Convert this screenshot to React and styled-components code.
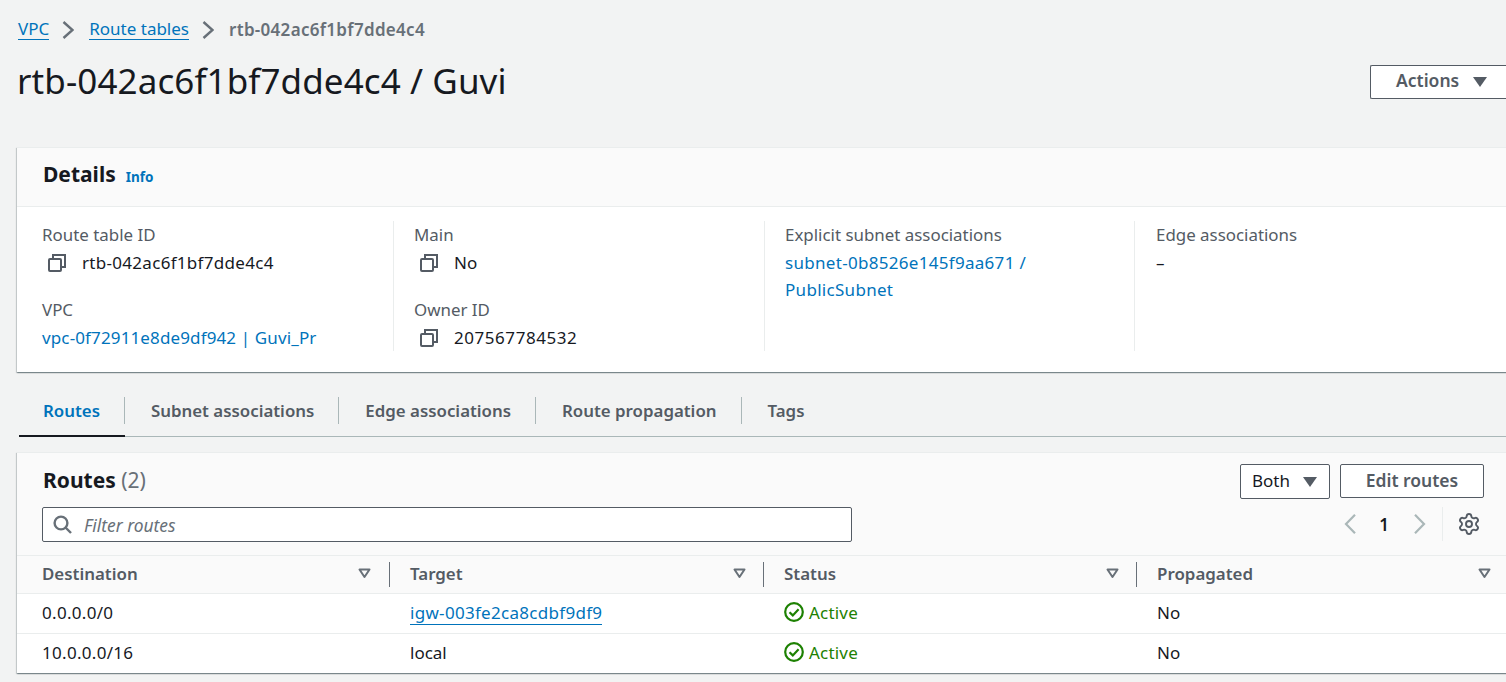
import styled, { createGlobalStyle } from "styled-components";
import { Settings } from "lucide-react";

const colors = {
  page: "#f2f3f3",
  head: "#fafafa",
  line: "#eaeded",
  text: "#16191f",
  muted: "#545b64",
  gray: "#687078",
  link: "#0073bb",
  green: "#1d8102",
  border: "#545b64",
};

const GlobalStyle = createGlobalStyle`
  html, body {
    margin: 0;
    padding: 0;
    background: ${colors.page};
    overflow: hidden;
  }
  body {
    font-family: "Noto Sans", "Open Sans", sans-serif;
    font-size: 17px;
    color: ${colors.text};
  }
  * { box-sizing: border-box; }
`;

const Page = styled.div`
  width: 1506px;
  height: 682px;
  overflow: hidden;
  padding: 0 0 0 17px;
`;

const Crumbs = styled.nav`
  display: flex;
  align-items: center;
  height: 58px;
  font-size: 17px;
`;

const CrumbLink = styled.a`
  color: ${colors.link};
  border-bottom: 1px solid ${colors.link};
  line-height: 21px;
  margin-left: 1px;
`;

const CrumbCurrent = styled.span`
  margin-left: 1px;
  color: ${colors.gray};
  font-weight: 600;
  letter-spacing: 0.3px;
`;

const CrumbChevron = styled.svg`
  width: 12px;
  height: 18px;
  margin: 1px 14px 0 13px;
  flex: none;
`;

const TitleRow = styled.div`
  display: flex;
  align-items: center;
  justify-content: space-between;
  height: 46px;
  margin-bottom: 43px;
`;

const Title = styled.h1`
  margin: 0;
  font-size: 35px;
  font-weight: 400;
  line-height: 46px;
  letter-spacing: 0.1px;
  color: ${colors.text};
`;

const Button = styled.button`
  display: inline-flex;
  align-items: center;
  justify-content: center;
  gap: ${(p) => p.$gap || 0}px;
  height: 34px;
  width: ${(p) => p.$width}px;
  padding: 0 0 3px;
  background: #fff;
  border: 1px solid ${colors.border};
  border-radius: 2px;
  color: ${colors.muted};
  font-family: inherit;
  font-size: 17.5px;
  font-weight: 600;
`;

const ActionsButton = styled(Button)`
  justify-content: flex-start;
  padding-left: 25px;
  margin-top: 1px;
  border-right: none;
  border-radius: 2px 0 0 2px;
`;

const BothSelect = styled(Button)`
  justify-content: flex-start;
  padding-left: 11px;
  height: 35px;
  color: ${colors.text};
  font-size: 17px;
  font-weight: 400;
`;

const Caret = styled.svg`
  width: 14px;
  height: 10px;
  margin-top: 3px;
  flex: none;
`;

const Card = styled.section`
  width: 1495px;
  background: #fff;
  box-shadow: 0 1px 1px 0 rgba(0, 28, 36, 0.3), 1px 1px 1px 0 rgba(0, 28, 36, 0.15), -1px 1px 1px 0 rgba(0, 28, 36, 0.15);
  border-top: 1px solid ${colors.line};
`;

const CardHead = styled.header`
  display: flex;
  align-items: center;
  gap: 10px;
  height: 59px;
  padding: 0 0 7px 26px;
  background: ${colors.head};
  border-bottom: 1px solid ${colors.line};
`;

const CardTitle = styled.h2`
  margin: 0;
  font-size: 21px;
  font-weight: 700;
  line-height: 28px;
  color: ${colors.text};
`;

const InfoLink = styled.a`
  color: ${colors.link};
  font-size: 13.5px;
  font-weight: 700;
  margin-top: 6px;
`;

const DetailGrid = styled.div`
  display: grid;
  grid-template-columns: 372px 371px 370px 370px;
  padding: 14px 0 20px 5px;
  height: 165px;
`;

const DetailCol = styled.div`
  display: flex;
  flex-direction: column;
  gap: 20px;
  padding-left: ${(p) => (p.$last ? 21 : 20)}px;
  border-right: ${(p) => (p.$last ? "none" : `1px solid ${colors.line}`)};
  height: 130px;
`;

const Field = styled.div`
  display: flex;
  flex-direction: column;
`;

const Label = styled.div`
  color: ${colors.muted};
  font-size: 16.9px;
  line-height: 28px;
`;

const Value = styled.div`
  display: flex;
  align-items: center;
  gap: 16px;
  padding-left: 6px;
  line-height: 27px;
  font-size: 17px;
  letter-spacing: ${(p) => p.$track || 0}px;
  color: ${colors.text};
`;

const ValueLink = styled.a`
  display: block;
  color: ${colors.link};
  font-size: 17px;
  line-height: 27px;
  letter-spacing: ${(p) => p.$track || 0}px;
`;

const Dash = styled.div`
  font-size: 17px;
  line-height: 27px;
`;

const CopyIcon = styled.svg`
  width: 18px;
  height: 18px;
  flex: none;
`;

const Tabs = styled.div`
  display: flex;
  height: 52px;
  margin: 13px 0 0 2px;
  border-bottom: 1px solid #aab7b8;
`;

const Tab = styled.div`
  position: relative;
  display: flex;
  align-items: center;
  height: 51px;
  padding: ${(p) => (p.$active ? "0 25px 0 24px" : "0 25px 0 26px")};
  font-size: 16.85px;
  font-weight: 600;
  color: ${(p) => (p.$active ? colors.link : colors.muted)};

  &::after {
    content: "";
    display: ${(p) => (p.$last ? "none" : "block")};
    position: absolute;
    right: 0;
    top: 12px;
    height: 27px;
    width: 1px;
    background: #aab7b8;
  }

  &::before {
    content: "";
    display: ${(p) => (p.$active ? "block" : "none")};
    position: absolute;
    left: 0;
    right: 0;
    bottom: -1px;
    height: 2px;
    background: ${colors.text};
  }
`;

const RoutesCard = styled(Card)`
  margin-top: 15px;
`;

const RoutesHead = styled.div`
  display: flex;
  justify-content: space-between;
  height: 102px;
  padding: 11px 28px 0 25px;
  background: ${colors.head};
`;

const RoutesLeft = styled.div`
  display: flex;
  flex-direction: column;
  gap: 13px;
  padding-top: 2px;

  h2 {
    margin-left: 1px;
  }
`;

const Count = styled.span`
  color: ${colors.gray};
  font-weight: 400;
`;

const FilterBox = styled.div`
  display: flex;
  align-items: center;
  gap: 12px;
  width: 810px;
  height: 35px;
  padding-left: 10px;
  background: #fff;
  border: 1px solid ${colors.border};
  border-radius: 2px;
  color: ${colors.gray};
  font-size: 17.4px;
  font-style: italic;
`;

const RoutesRight = styled.div`
  display: flex;
  flex-direction: column;
  align-items: flex-end;
  gap: 8px;
`;

const ButtonRow = styled.div`
  display: flex;
  align-items: flex-start;
  gap: 10px;
`;

const Pager = styled.div`
  display: flex;
  align-items: center;
  height: 34px;
  padding-right: 3px;
`;

const PageNum = styled.span`
  width: 20px;
  margin: 0 18px 0 16px;
  font-size: 17px;
  font-weight: 600;
  text-align: center;
`;

const PagerDivider = styled.span`
  width: 1px;
  height: 34px;
  margin: 0 14px;
  background: ${colors.line};
`;

const TableRow = styled.div`
  display: grid;
  grid-template-columns: 369px 374px 373px 1fr;
  align-items: center;
  height: ${(p) => (p.$head ? 38 : 40)}px;
  padding: 0 4px;
  background: ${(p) => (p.$head ? colors.head : "#fff")};
  border-top: 1px solid ${colors.line};
`;

const HeadCell = styled.div`
  display: flex;
  align-items: center;
  justify-content: space-between;
  height: 25px;
  padding: 0 17px 2px 20px;
  color: ${colors.muted};
  font-size: 16.9px;
  font-weight: 600;
  border-right: ${(p) => (p.$last ? "none" : `1px solid ${colors.gray}`)};

  &:first-child {
    padding: 0 18px 2px 21px;
  }
`;

const Cell = styled.div`
  padding: 0 0 3px 20px;
  font-size: 17px;
  letter-spacing: ${(p) => p.$track || 0}px;
  color: ${colors.text};

  &:first-child {
    padding-left: 21px;
  }
`;

const CellLink = styled.a`
  color: ${colors.link};
  border-bottom: 1px solid ${colors.link};
`;

const StatusCell = styled(Cell)`
  display: flex;
  align-items: center;
  gap: 5px;
  letter-spacing: 0.2px;
  color: ${colors.green};
`;

const Chevron = ({ left }) => (
  <svg width="16" height="20" viewBox="0 0 16 20" fill="none" stroke="#aab7b8" strokeWidth="2.2">
    <path d={left ? "M13 0.8 4 10l9 9.2" : "M3 0.8 12 10l-9 9.2"} />
  </svg>
);

const CrumbSep = () => (
  <CrumbChevron viewBox="0 0 12 18" fill="none" stroke="#687078" strokeWidth="2.4">
    <path d="M1.5 1 10.5 9l-9 8" />
  </CrumbChevron>
);

const Copy = () => (
  <CopyIcon viewBox="0 0 18 18" fill="none" stroke="#545b64" strokeWidth="2">
    <rect x="1" y="5" width="12" height="12" rx="1" />
    <path d="M5 5V1h12v12h-4" />
  </CopyIcon>
);

const CaretDown = () => (
  <Caret viewBox="0 0 14 10">
    <path d="M0 0h14L7 10z" fill="#545b64" />
  </Caret>
);

const SortIcon = () => (
  <svg width="13" height="11" viewBox="0 0 13 11" fill="none" stroke="#687078" strokeWidth="2">
    <path d="M1.5 1.5h10L6.5 9z" strokeLinejoin="round" />
  </svg>
);

const SearchIcon = () => (
  <svg width="19" height="19" viewBox="0 0 19 19" fill="none" stroke="#687078" strokeWidth="2.4">
    <circle cx="8" cy="8" r="6.4" />
    <path d="M12.5 12.5 18 18" />
  </svg>
);

const ActiveIcon = () => (
  <svg width="20" height="20" viewBox="0 0 20 20" fill="none" stroke="#1d8102" strokeWidth="2.2">
    <circle cx="10" cy="10" r="8.8" />
    <path d="M5.5 10.2 8.8 13.4 14.6 7.2" />
  </svg>
);

const routes = [
  { dest: "0.0.0.0/0", target: "igw-003fe2ca8cdbf9df9", link: true },
  { dest: "10.0.0.0/16", target: "local" },
];

function App() {
  return (
    <Page>
      <GlobalStyle />
      <Crumbs>
        <CrumbLink>VPC</CrumbLink>
        <CrumbSep />
        <CrumbLink>Route tables</CrumbLink>
        <CrumbSep />
        <CrumbCurrent>rtb-042ac6f1bf7dde4c4</CrumbCurrent>
      </Crumbs>
      <TitleRow>
        <Title>rtb-042ac6f1bf7dde4c4 / Guvi</Title>
        <ActionsButton $width={136} $gap={14}>
          Actions <CaretDown />
        </ActionsButton>
      </TitleRow>

      <Card>
        <CardHead>
          <CardTitle>Details</CardTitle>
          <InfoLink>Info</InfoLink>
        </CardHead>
        <DetailGrid>
          <DetailCol>
            <Field>
              <Label>Route table ID</Label>
              <Value $track={0.3}><Copy />rtb-042ac6f1bf7dde4c4</Value>
            </Field>
            <Field>
              <Label>VPC</Label>
              <ValueLink $track={0.13}>vpc-0f72911e8de9df942 | Guvi_Pr</ValueLink>
            </Field>
          </DetailCol>
          <DetailCol>
            <Field>
              <Label>Main</Label>
              <Value><Copy />No</Value>
            </Field>
            <Field>
              <Label>Owner ID</Label>
              <Value $track={0.55}><Copy />207567784532</Value>
            </Field>
          </DetailCol>
          <DetailCol>
            <Field>
              <Label>Explicit subnet associations</Label>
              <ValueLink $track={0.3}>subnet-0b8526e145f9aa671 /<br />PublicSubnet</ValueLink>
            </Field>
          </DetailCol>
          <DetailCol $last>
            <Field>
              <Label>Edge associations</Label>
              <Dash>–</Dash>
            </Field>
          </DetailCol>
        </DetailGrid>
      </Card>

      <Tabs>
        <Tab $active>Routes</Tab>
        <Tab>Subnet associations</Tab>
        <Tab>Edge associations</Tab>
        <Tab>Route propagation</Tab>
        <Tab $last>Tags</Tab>
      </Tabs>

      <RoutesCard>
        <RoutesHead>
          <RoutesLeft>
            <CardTitle>Routes <Count>(2)</Count></CardTitle>
            <FilterBox>
              <SearchIcon />
              Filter routes
            </FilterBox>
          </RoutesLeft>
          <RoutesRight>
            <ButtonRow>
              <BothSelect $width={90} $gap={13}>Both <CaretDown /></BothSelect>
              <Button $width={144}>Edit routes</Button>
            </ButtonRow>
            <Pager>
              <Chevron left />
              <PageNum>1</PageNum>
              <Chevron />
              <PagerDivider />
              <Settings size={24} color={colors.muted} strokeWidth={1.9} />
            </Pager>
          </RoutesRight>
        </RoutesHead>
        <TableRow $head>
          <HeadCell>Destination <SortIcon /></HeadCell>
          <HeadCell>Target <SortIcon /></HeadCell>
          <HeadCell>Status <SortIcon /></HeadCell>
          <HeadCell $last>Propagated <SortIcon /></HeadCell>
        </TableRow>
        {routes.map((r) => (
          <TableRow key={r.dest}>
            <Cell $track={0.3}>{r.dest}</Cell>
            <Cell $track={r.link ? 0.3 : 0}>{r.link ? <CellLink>{r.target}</CellLink> : r.target}</Cell>
            <StatusCell><ActiveIcon />Active</StatusCell>
            <Cell>No</Cell>
          </TableRow>
        ))}
      </RoutesCard>
    </Page>
  );
}

export default App;
